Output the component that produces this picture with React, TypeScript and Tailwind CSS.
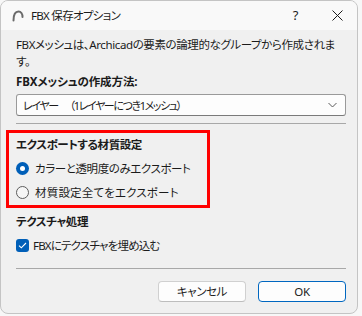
import React from "react";

const font = {
  fontFamily: '"Noto Sans", "Noto Sans CJK JP", sans-serif',
};

function Radio({ checked }: { checked: boolean }) {
  if (checked) {
    return (
      <span className="flex h-[13px] w-[13px] shrink-0 items-center justify-center rounded-full bg-[#005fb8]">
        <span className="h-[5px] w-[5px] rounded-full bg-white" />
      </span>
    );
  }
  return <span className="box-border block h-[13px] w-[13px] shrink-0 rounded-full border border-[#5c5c5c] bg-[#f6f6f6]" />;
}

export default function App() {
  return (
    <div
      className="h-[316px] w-[362px] bg-[#f7f7f7] text-[11.5px] leading-[17px] tracking-[-0.4px] text-[#1b1b1b] [font-feature-settings:'palt']"
      style={font}
    >
      <div className="box-border flex h-[314px] w-[358px] flex-col overflow-hidden rounded-[8px] border border-[#c4c4c4] bg-[#f0f0f0]">
        {/* title bar */}
        <div className="flex h-[29px] shrink-0 items-center bg-[#f9f9f9]">
          <svg width="12" height="12" viewBox="0 0 12 12" className="ml-[11px]">
            <path d="M1.5 10.5 C1.5 4 4 1.5 6.5 1.5 C9 1.5 10.5 4 10.5 7" fill="none" stroke="#6b6b6b" strokeWidth="2" strokeLinecap="round" />
          </svg>
          <span className="ml-[7px] whitespace-nowrap tracking-[-0.7px]">FBX 保存オプション</span>
          <span className="ml-auto mr-[34px] text-[13px]">?</span>
          <svg width="11" height="11" viewBox="0 0 11 11" className="mr-[14px]">
            <path d="M0.5 0.5 L10.5 10.5 M10.5 0.5 L0.5 10.5" stroke="#1b1b1b" strokeWidth="1" />
          </svg>
        </div>

        {/* content */}
        <div className="flex flex-1 flex-col px-[15px] pt-[6px]">
          <p className="whitespace-nowrap">
            FBXメッシュは、Archicadの要素の論理的なグループから作成されま
            <br />
            す。
          </p>
          <p className="mt-[3px] whitespace-nowrap font-bold tracking-[-0.1px]">FBXメッシュの作成方法:</p>
          <div className="mt-[4px] box-border flex h-[22px] w-[330px] items-center rounded-[3px] border border-[#9a9a9a] border-b-[#7a7a7a] bg-[#fdfdfd] pl-[6px] pr-[8px]">
            <span className="whitespace-nowrap text-[11px] tracking-[-1.4px]">レイヤー</span>
            <span className="ml-[12px] whitespace-nowrap text-[11px] tracking-[-1.4px]">（1レイヤーにつき1メッシュ）</span>
            <svg width="9" height="6" viewBox="0 0 9 6" className="ml-auto">
              <path d="M0.5 1 L4.5 5 L8.5 1" fill="none" stroke="#5a5a5a" strokeWidth="1" />
            </svg>
          </div>
          <div className="mt-[7px] h-px w-[330px] bg-[#a8a8a8]" />

          <div className="-ml-[10px] mt-[6px] box-border w-[204px] border-[3px] border-[#ff0000] pb-[1px] pl-[7px] pt-[3px]">
            <p className="whitespace-nowrap font-bold">エクスポートする材質設定</p>
            <div className="mt-[3px] flex h-[24px] items-center gap-[6px]">
              <Radio checked />
              <span className="whitespace-nowrap">カラーと透明度のみエクスポート</span>
            </div>
            <div className="flex h-[24px] items-center gap-[6px]">
              <Radio checked={false} />
              <span className="whitespace-nowrap tracking-[0.2px]">材質設定全てをエクスポート</span>
            </div>
          </div>

          <p className="mt-[5px] whitespace-nowrap font-bold">テクスチャ処理</p>
          <div className="mt-[5px] flex h-[20px] items-center gap-[4px]">
            <span className="flex h-[13px] w-[13px] shrink-0 items-center justify-center rounded-[3px] bg-[#005fb8]">
              <svg width="9" height="7" viewBox="0 0 9 7">
                <path d="M1 3.6 L3.3 5.8 L8 1" fill="none" stroke="white" strokeWidth="1.1" />
              </svg>
            </span>
            <span className="whitespace-nowrap tracking-[-0.8px]">FBXにテクスチャを埋め込む</span>
          </div>
          <div className="mt-[13px] h-px w-[330px] bg-[#a8a8a8]" />

          <div className="mt-[12px] flex w-[330px] justify-end gap-[12px]">
            <button className="box-border flex h-[21px] w-[88px] items-center justify-center rounded-[4px] border border-[#d0d0d0] border-b-[#bdbdbd] bg-[#fdfdfd]">
              キャンセル
            </button>
            <button className="box-border flex h-[21px] w-[88px] items-center justify-center rounded-[4px] border border-[#0067c0] bg-[#fdfdfd]">
              OK
            </button>
          </div>
        </div>
      </div>
    </div>
  );
}
